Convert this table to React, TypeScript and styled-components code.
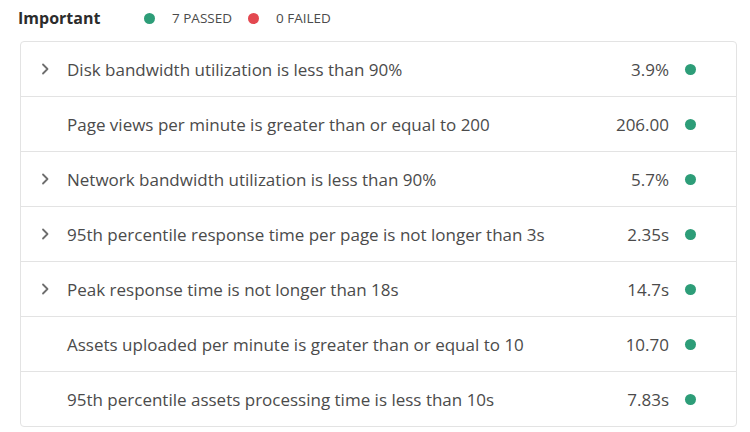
import styled, { createGlobalStyle } from 'styled-components';

const GlobalStyle = createGlobalStyle`
    body {
        margin: 0;
        background: #ffffff;
        font-family: 'Open Sans', 'Noto Sans', sans-serif;
        color: #4b4b4b;
    }
`;

type Check = { label: string; value: string; expandable: boolean };

const CHECKS: Array<Check> = [
    { label: 'Disk bandwidth utilization is less than 90%', value: '3.9%', expandable: true },
    { label: 'Page views per minute is greater than or equal to 200', value: '206.00', expandable: false },
    { label: 'Network bandwidth utilization is less than 90%', value: '5.7%', expandable: true },
    { label: '95th percentile response time per page is not longer than 3s', value: '2.35s', expandable: true },
    { label: 'Peak response time is not longer than 18s', value: '14.7s', expandable: true },
    { label: 'Assets uploaded per minute is greater than or equal to 10', value: '10.70', expandable: false },
    { label: '95th percentile assets processing time is less than 10s', value: '7.83s', expandable: false },
];

const Chevron = () => (
    <svg width='10' height='12' viewBox='0 0 10 12'>
        <path d='M3 1.5 L7.5 6 L3 10.5' fill='none' stroke='#6e6e6e' strokeWidth='1.8' strokeLinecap='round' strokeLinejoin='round' />
    </svg>
);

export default function App() {
    const passed = CHECKS.length;

    return (
        <Page>
            <GlobalStyle />
            <Header>
                <Title>Important</Title>
                <Summary>
                    <Status>
                        <Dot $color='#2d9d78' />
                        {passed} PASSED
                    </Status>
                    <Status>
                        <Dot $color='#e34850' />0 FAILED
                    </Status>
                </Summary>
            </Header>
            <Card>
                {CHECKS.map((check) => (
                    <Row key={check.label}>
                        <Toggle>{check.expandable && <Chevron />}</Toggle>
                        <Label>{check.label}</Label>
                        <Value>{check.value}</Value>
                        <Dot $color='#2d9d78' />
                    </Row>
                ))}
            </Card>
        </Page>
    );
}

const Page = styled.div`
    width: 750px;
    height: 432px;
    padding: 5px 13px 0 20px;
    box-sizing: border-box;
`;

const Header = styled.div`
    display: flex;
    align-items: center;
    height: 26px;
    margin-left: -2px;
    margin-bottom: 10px;
`;

const Title = styled.h2`
    margin: 0;
    font-size: 16px;
    font-weight: 700;
    color: #2c2c2c;
    width: 126px;
`;

const Summary = styled.div`
    display: flex;
    align-items: center;
    gap: 16px;
`;

const Status = styled.span`
    display: flex;
    align-items: center;
    gap: 17px;
    font-size: 13.5px;
    color: #4b4b4b;
`;

const Dot = styled.span<{ $color: string }>`
    display: inline-block;
    flex: none;
    width: 11px;
    height: 11px;
    border-radius: 50%;
    background: ${({ $color }) => $color};
`;

const Card = styled.div`
    border: 1px solid #e3e3e3;
    border-radius: 4px;
    overflow: hidden;
`;

const Row = styled.div`
    display: flex;
    align-items: center;
    height: 54px;
    padding-right: 40px;
    font-size: 17px;
    color: #4b4b4b;

    & + & {
        border-top: 1px solid #e3e3e3;
    }
`;

const Toggle = styled.span`
    width: 46px;
    padding-left: 19px;
    box-sizing: border-box;
    display: flex;
    align-items: center;
`;

const Label = styled.span`
    flex: 1;
    white-space: nowrap;
`;

const Value = styled.span`
    text-align: right;
    margin-right: 16px;
`;
